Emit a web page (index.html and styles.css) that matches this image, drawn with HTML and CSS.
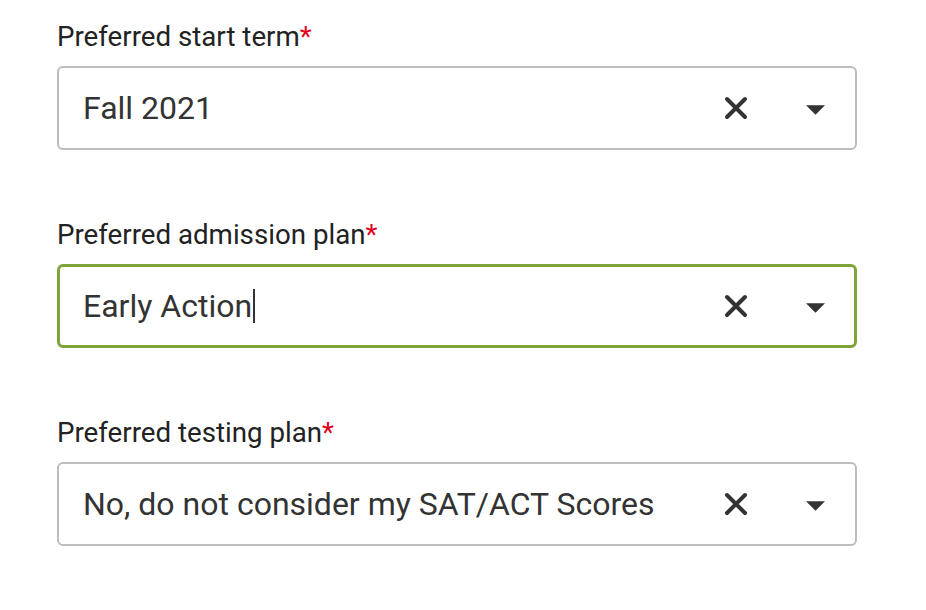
FILE: index.html
```html
<!DOCTYPE html>
<html>
<head>
<meta charset="utf-8">
<link rel="stylesheet" href="styles.css">
</head>
<body>
<div class="form">
  <div class="field">
    <div class="label">Preferred start term<span class="req">*</span></div>
    <div class="select">
      <div class="value">Fall 2021</div>
      <svg class="clear" viewBox="0 0 24 24"><path d="M3 3 L21 21 M21 3 L3 21"/></svg>
      <svg class="caret" viewBox="0 0 18 9"><path d="M0 0 H18 L9 9 Z"/></svg>
    </div>
  </div>
  <div class="field">
    <div class="label">Preferred admission plan<span class="req">*</span></div>
    <div class="select focus">
      <div class="value">Early Action<span class="cursor"></span></div>
      <svg class="clear" viewBox="0 0 24 24"><path d="M3 3 L21 21 M21 3 L3 21"/></svg>
      <svg class="caret" viewBox="0 0 18 9"><path d="M0 0 H18 L9 9 Z"/></svg>
    </div>
  </div>
  <div class="field">
    <div class="label">Preferred testing plan<span class="req">*</span></div>
    <div class="select">
      <div class="value">No, do not consider my SAT/ACT Scores</div>
      <svg class="clear" viewBox="0 0 24 24"><path d="M3 3 L21 21 M21 3 L3 21"/></svg>
      <svg class="caret" viewBox="0 0 18 9"><path d="M0 0 H18 L9 9 Z"/></svg>
    </div>
  </div>
</div>
</body>
</html>
```
FILE: styles.css
```css
html, body {
  margin: 0;
  padding: 0;
  background: #fff;
}
body {
  font-family: Roboto, "Liberation Sans", sans-serif;
  width: 926px;
  height: 610px;
  overflow: hidden;
}
.form {
  padding: 21px 0 0 57px;
  display: flex;
  flex-direction: column;
  gap: 69px;
}
.field {
  display: flex;
  flex-direction: column;
  gap: 13px;
}
.label {
  font-size: 27.7px;
  line-height: 32px;
  color: #222;
}
.req {
  color: #e2001a;
}
.select {
  box-sizing: border-box;
  width: 800px;
  height: 84px;
  border: 2px solid #bdbdbd;
  border-radius: 6px;
  display: flex;
  align-items: center;
  padding: 0 30px 0 24px;
}
.select.focus {
  border: 3px solid #7fa53a;
  padding-left: 23px;
  padding-right: 29px;
}
.value {
  flex: 1;
  font-size: 32px;
  color: #333;
  display: flex;
  align-items: center;
}
.cursor {
  display: inline-block;
  width: 2px;
  height: 34px;
  background: #333;
  margin-left: 1px;
}
.clear {
  width: 24px;
  height: 24px;
  fill: none;
  stroke: #333;
  stroke-width: 4;
  stroke-linecap: round;
  margin-right: 58px;
}
.caret {
  width: 19px;
  height: 10px;
  fill: #333;
  margin-top: 3px;
}
```
